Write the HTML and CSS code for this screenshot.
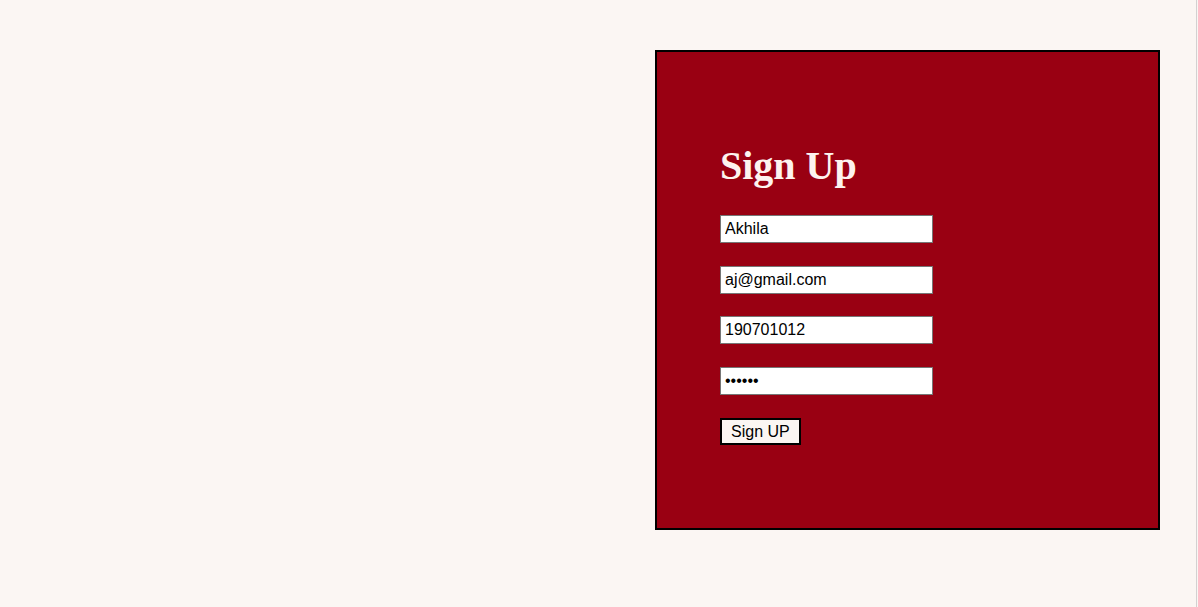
FILE: index.html
```html
<!DOCTYPE html>
<html lang="en">
<head>
<meta charset="utf-8">
<title>Sign Up</title>
<link rel="stylesheet" href="styles.css">
</head>
<body>
<div class="page">
  <div class="card">
    <h1 class="title">Sign Up</h1>
    <form class="form">
      <input class="field" type="text" value="Akhila">
      <input class="field f2" type="email" value="aj@gmail.com">
      <input class="field f3" type="text" value="190701012">
      <input class="field f4" type="password" value="123456">
      <button class="btn" type="button">Sign UP</button>
    </form>
  </div>
</div>
</body>
</html>
```
FILE: styles.css
```css
html, body {
  margin: 0;
  padding: 0;
  background: #fbf6f3;
}
body {
  height: 607px;
  overflow: hidden;
  font-family: "Liberation Sans", Arial, sans-serif;
}
.page {
  width: calc(100% - 1px);
  height: 100%;
  box-sizing: border-box;
  border-right: 1px solid #d3d1d1;
  display: flex;
  justify-content: flex-end;
  align-items: flex-start;
  padding: 50px 36px 0 0;
}
.card {
  width: 505px;
  height: 480px;
  box-sizing: border-box;
  border: 2px solid #000;
  background: #990012;
  padding: 92px 0 0 63px;
}
.title {
  margin: 0 0 27px;
  font-family: "Liberation Serif", "Times New Roman", serif;
  font-weight: 700;
  font-size: 40px;
  line-height: 44px;
  color: #fdf3ef;
}
.form {
  display: flex;
  flex-direction: column;
  align-items: flex-start;
}
.field {
  width: 213px;
  height: 28px;
  box-sizing: border-box;
  margin: 0;
  border: 1px solid #767676;
  padding: 1px 4px;
  background: #fff;
  color: #000;
  font-family: "Liberation Sans", Arial, sans-serif;
  font-size: 16px;
  outline: none;
}
.f2 { margin-top: 23px; }
.f3 { margin-top: 22px; }
.f4 { margin-top: 23px; }
.btn {
  margin-top: 23px;
  height: 27px;
  box-sizing: border-box;
  border: 2px solid #000;
  background: #fbf6f3;
  padding: 0 9px;
  color: #000;
  font-family: "Liberation Sans", Arial, sans-serif;
  font-size: 16px;
  line-height: 20px;
}
```
